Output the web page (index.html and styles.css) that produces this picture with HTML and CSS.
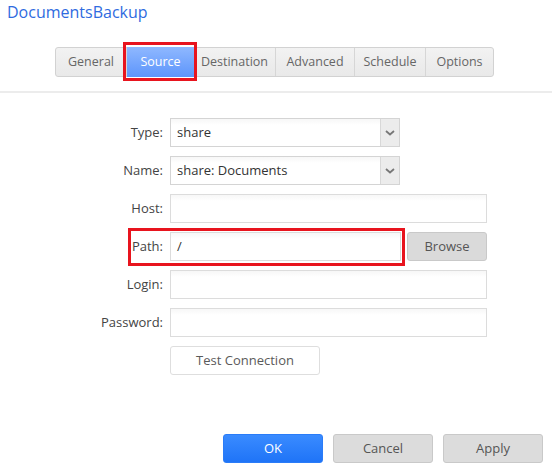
FILE: index.html
```html
<!DOCTYPE html>
<html>
<head>
<meta charset="utf-8">
<link rel="stylesheet" href="styles.css">
</head>
<body>
<div class="title">DocumentsBackup</div>
<div class="tabs-wrap">
  <div class="tabs">
    <div class="tab w-general">General</div>
    <div class="tab active w-source">Source<span class="mark mark-tab"></span></div>
    <div class="tab w-dest">Destination</div>
    <div class="tab w-adv">Advanced</div>
    <div class="tab w-sched">Schedule</div>
    <div class="tab last w-opt">Options</div>
  </div>
</div>
<div class="divider"></div>
<div class="form">
  <div class="label">Type:</div>
  <div class="select"><span class="val">share</span><span class="arrow"><svg width="10" height="6" viewBox="0 0 10 6"><path d="M1 1 L5 4.5 L9 1" fill="none" stroke="#777" stroke-width="1.8"/></svg></span></div>

  <div class="label">Name:</div>
  <div class="select"><span class="val">share: Documents</span><span class="arrow"><svg width="10" height="6" viewBox="0 0 10 6"><path d="M1 1 L5 4.5 L9 1" fill="none" stroke="#777" stroke-width="1.8"/></svg></span></div>

  <div class="label">Host:</div>
  <div class="input"></div>

  <div class="label">Path:<span class="mark mark-path"></span></div>
  <div class="path-row">
    <div class="input path-input">/</div>
    <div class="btn browse">Browse</div>
  </div>

  <div class="label">Login:</div>
  <div class="input"></div>

  <div class="label">Password:</div>
  <div class="input"></div>

  <div></div>
  <div class="test-row"><div class="btn test">Test Connection</div></div>
</div>
<div class="footer">
  <div class="btn primary">OK</div>
  <div class="btn gray">Cancel</div>
  <div class="btn gray">Apply</div>
</div>
</body>
</html>
```
FILE: styles.css
```css
* { box-sizing: border-box; }
html, body { margin: 0; padding: 0; background: #fff; }
body {
  width: 552px;
  height: 473px;
  font-family: "Open Sans", "Liberation Sans", sans-serif;
  font-size: 13px;
  color: #333;
  position: relative;
  overflow: hidden;
}
.title {
  color: #2f6be0;
  font-size: 16px;
  line-height: 20px;
  padding: 2px 0 0 7px;
  height: 24px;
}
.tabs-wrap {
  display: flex;
  padding: 23px 0 0 55px;
}
.tabs {
  display: flex;
  height: 30px;
  border: 1px solid #d2d2d2;
  border-radius: 3px;
  background: linear-gradient(#f2f2f2, #e9e9e9);
}
.tab {
  position: relative;
  text-align: center;
  font-size: 12.5px;
  line-height: 28px;
  color: #666;
  border-right: 1px solid #d6d6d6;
}
.w-general { width: 71px; }
.w-source { width: 67px; }
.w-dest { width: 82px; }
.w-adv { width: 79px; }
.w-sched { width: 71px; }
.w-opt { width: 67px; }
.tab.last { border-right: none; }
.tab.active {
  background: linear-gradient(#8fb8ff, #5d95fb);
  color: #fff;
  margin: -1px 0;
  line-height: 30px;
  border-right: none;
}
.mark {
  position: absolute;
  border: 3px solid #e8141e;
  pointer-events: none;
}
.mark-tab { left: -4px; right: -3px; top: -5px; bottom: -4px; }
.divider {
  margin-top: 14px;
  height: 2px;
  background: #ececec;
}
.form {
  display: grid;
  grid-template-columns: 163px 317px;
  column-gap: 7px;
  row-gap: 9px;
  margin-top: 25px;
}
.label {
  text-align: right;
  line-height: 29px;
  color: #444;
  position: relative;
}
.mark-path { left: 128px; width: 277px; top: -4px; bottom: -5px; }
.input, .select {
  height: 29px;
  border: 1px solid #dcdcdc;
  background: linear-gradient(#f7f7f7, #fff 6px);
  line-height: 27px;
  padding-left: 6px;
  color: #333;
}
.select {
  width: 230px;
  display: flex;
  padding-left: 0;
  border-color: #d4d4d4;
}
.select .val { flex: 1; padding-left: 6px; }
.select .arrow {
  width: 19px;
  background: #ececec;
  border-left: 1px solid #d8d8d8;
  display: flex;
  align-items: center;
  justify-content: center;
}
.path-row { display: flex; gap: 6px; }
.path-input { width: 231px; }
.btn {
  height: 29px;
  border-radius: 3px;
  text-align: center;
  line-height: 27px;
  border: 1px solid #c9c9c9;
}
.browse {
  width: 80px;
  background: #dadada;
  color: #555;
}
.test {
  width: 150px;
  background: #fff;
  border-color: #dedede;
  color: #5a5a5a;
}
.footer {
  position: absolute;
  left: 223px;
  top: 434px;
  display: flex;
  gap: 10px;
}
.footer .btn { width: 100px; }
.primary {
  background: linear-gradient(#3a8bff, #1f74f7);
  border-color: #2a7cf8;
  color: #fff;
}
.gray {
  background: #dcdcdc;
  color: #555;
}
```
